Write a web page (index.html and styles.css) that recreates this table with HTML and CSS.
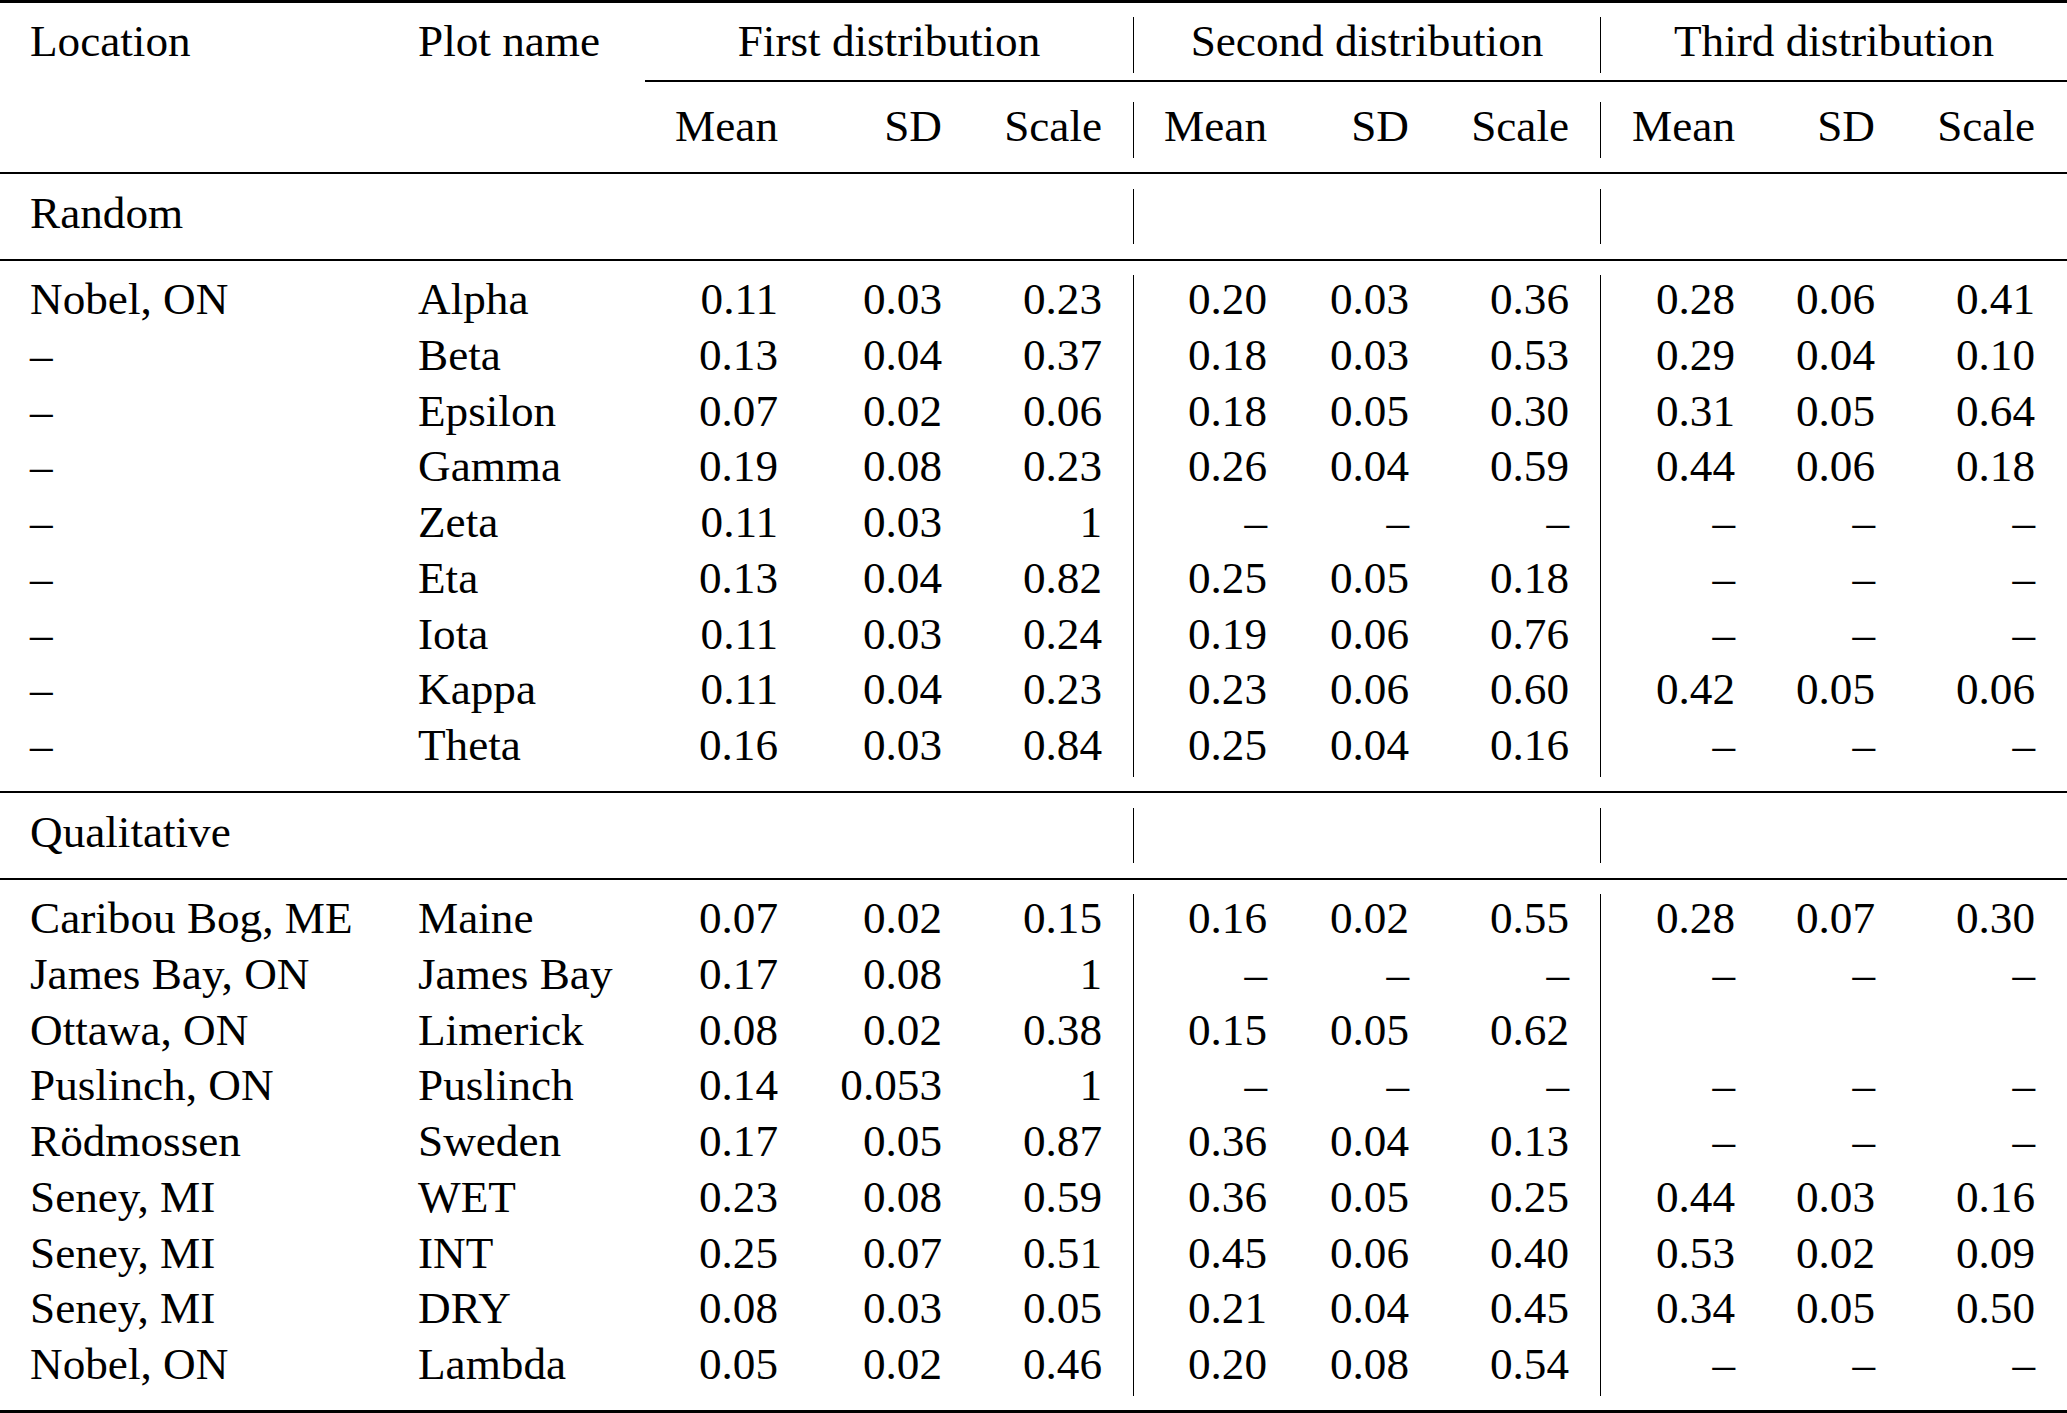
FILE: index.html
```html
<!DOCTYPE html>
<html lang="en">
<head>
<meta charset="utf-8">
<title>Distributions table</title>
<link rel="stylesheet" href="styles.css">
</head>
<body>
<table class="tbl">
  <colgroup>
    <col class="c-loc"><col class="c-plot">
    <col class="c-m1"><col class="c-sd1"><col class="c-sc1">
    <col class="c-m2"><col class="c-sd2"><col class="c-sc2">
    <col class="c-m3"><col class="c-sd3"><col class="c-sc3">
  </colgroup>
  <tbody>
    <tr class="toprule"><td colspan="11" class="ink"></td></tr>
    <tr class="sp-top"><td colspan="11"></td></tr>
    <tr class="r">
      <td class="loc">Location</td><td class="plot">Plot name</td>
      <td colspan="3" class="grp">First distribution</td>
      <td colspan="3" class="grp bar">Second distribution</td>
      <td colspan="3" class="grp bar">Third distribution</td>
    </tr>
    <tr class="sp-cmid-above"><td colspan="11"></td></tr>
    <tr class="cmidrule"><td colspan="2"></td><td colspan="9" class="ink"></td></tr>
    <tr class="sp-cmid-below"><td colspan="11"></td></tr>
    <tr class="r">
      <td class="loc"></td><td class="plot"></td>
      <td class="n">Mean</td><td class="n">SD</td><td class="n sc">Scale</td>
      <td class="n bar">Mean</td><td class="n">SD</td><td class="n sc">Scale</td>
      <td class="n bar">Mean</td><td class="n">SD</td><td class="n sc3">Scale</td>
    </tr>
    <tr class="sp-above"><td colspan="11"></td></tr>
    <tr class="midrule"><td colspan="11" class="ink"></td></tr>
    <tr class="sp-below"><td colspan="11"></td></tr>
    <tr class="r">
      <td colspan="5" class="loc">Random</td>
      <td colspan="3" class="bar"></td>
      <td colspan="3" class="bar"></td>
    </tr>
    <tr class="sp-above"><td colspan="11"></td></tr>
    <tr class="midrule"><td colspan="11" class="ink"></td></tr>
    <tr class="sp-below"><td colspan="11"></td></tr>

    <tr class="r"><td class="loc">Nobel, ON</td><td class="plot">Alpha</td><td class="n">0.11</td><td class="n">0.03</td><td class="n sc">0.23</td><td class="n bar">0.20</td><td class="n">0.03</td><td class="n sc">0.36</td><td class="n bar">0.28</td><td class="n">0.06</td><td class="n sc3">0.41</td></tr>
    <tr class="r"><td class="loc">–</td><td class="plot">Beta</td><td class="n">0.13</td><td class="n">0.04</td><td class="n sc">0.37</td><td class="n bar">0.18</td><td class="n">0.03</td><td class="n sc">0.53</td><td class="n bar">0.29</td><td class="n">0.04</td><td class="n sc3">0.10</td></tr>
    <tr class="r"><td class="loc">–</td><td class="plot">Epsilon</td><td class="n">0.07</td><td class="n">0.02</td><td class="n sc">0.06</td><td class="n bar">0.18</td><td class="n">0.05</td><td class="n sc">0.30</td><td class="n bar">0.31</td><td class="n">0.05</td><td class="n sc3">0.64</td></tr>
    <tr class="r"><td class="loc">–</td><td class="plot">Gamma</td><td class="n">0.19</td><td class="n">0.08</td><td class="n sc">0.23</td><td class="n bar">0.26</td><td class="n">0.04</td><td class="n sc">0.59</td><td class="n bar">0.44</td><td class="n">0.06</td><td class="n sc3">0.18</td></tr>
    <tr class="r"><td class="loc">–</td><td class="plot">Zeta</td><td class="n">0.11</td><td class="n">0.03</td><td class="n sc">1</td><td class="n bar">–</td><td class="n">–</td><td class="n sc">–</td><td class="n bar">–</td><td class="n">–</td><td class="n sc3">–</td></tr>
    <tr class="r"><td class="loc">–</td><td class="plot">Eta</td><td class="n">0.13</td><td class="n">0.04</td><td class="n sc">0.82</td><td class="n bar">0.25</td><td class="n">0.05</td><td class="n sc">0.18</td><td class="n bar">–</td><td class="n">–</td><td class="n sc3">–</td></tr>
    <tr class="r"><td class="loc">–</td><td class="plot">Iota</td><td class="n">0.11</td><td class="n">0.03</td><td class="n sc">0.24</td><td class="n bar">0.19</td><td class="n">0.06</td><td class="n sc">0.76</td><td class="n bar">–</td><td class="n">–</td><td class="n sc3">–</td></tr>
    <tr class="r"><td class="loc">–</td><td class="plot">Kappa</td><td class="n">0.11</td><td class="n">0.04</td><td class="n sc">0.23</td><td class="n bar">0.23</td><td class="n">0.06</td><td class="n sc">0.60</td><td class="n bar">0.42</td><td class="n">0.05</td><td class="n sc3">0.06</td></tr>
    <tr class="r"><td class="loc">–</td><td class="plot">Theta</td><td class="n">0.16</td><td class="n">0.03</td><td class="n sc">0.84</td><td class="n bar">0.25</td><td class="n">0.04</td><td class="n sc">0.16</td><td class="n bar">–</td><td class="n">–</td><td class="n sc3">–</td></tr>

    <tr class="sp-above2"><td colspan="11"></td></tr>
    <tr class="midrule"><td colspan="11" class="ink"></td></tr>
    <tr class="sp-below"><td colspan="11"></td></tr>
    <tr class="r">
      <td colspan="5" class="loc">Qualitative</td>
      <td colspan="3" class="bar"></td>
      <td colspan="3" class="bar"></td>
    </tr>
    <tr class="sp-above"><td colspan="11"></td></tr>
    <tr class="midrule"><td colspan="11" class="ink"></td></tr>
    <tr class="sp-below"><td colspan="11"></td></tr>

    <tr class="r"><td class="loc">Caribou Bog, ME</td><td class="plot">Maine</td><td class="n">0.07</td><td class="n">0.02</td><td class="n sc">0.15</td><td class="n bar">0.16</td><td class="n">0.02</td><td class="n sc">0.55</td><td class="n bar">0.28</td><td class="n">0.07</td><td class="n sc3">0.30</td></tr>
    <tr class="r"><td class="loc">James Bay, ON</td><td class="plot">James Bay</td><td class="n">0.17</td><td class="n">0.08</td><td class="n sc">1</td><td class="n bar">–</td><td class="n">–</td><td class="n sc">–</td><td class="n bar">–</td><td class="n">–</td><td class="n sc3">–</td></tr>
    <tr class="r"><td class="loc">Ottawa, ON</td><td class="plot">Limerick</td><td class="n">0.08</td><td class="n">0.02</td><td class="n sc">0.38</td><td class="n bar">0.15</td><td class="n">0.05</td><td class="n sc">0.62</td><td class="n bar"></td><td class="n"></td><td class="n sc3"></td></tr>
    <tr class="r"><td class="loc">Puslinch, ON</td><td class="plot">Puslinch</td><td class="n">0.14</td><td class="n">0.053</td><td class="n sc">1</td><td class="n bar">–</td><td class="n">–</td><td class="n sc">–</td><td class="n bar">–</td><td class="n">–</td><td class="n sc3">–</td></tr>
    <tr class="r"><td class="loc">Rödmossen</td><td class="plot">Sweden</td><td class="n">0.17</td><td class="n">0.05</td><td class="n sc">0.87</td><td class="n bar">0.36</td><td class="n">0.04</td><td class="n sc">0.13</td><td class="n bar">–</td><td class="n">–</td><td class="n sc3">–</td></tr>
    <tr class="r"><td class="loc">Seney, MI</td><td class="plot">WET</td><td class="n">0.23</td><td class="n">0.08</td><td class="n sc">0.59</td><td class="n bar">0.36</td><td class="n">0.05</td><td class="n sc">0.25</td><td class="n bar">0.44</td><td class="n">0.03</td><td class="n sc3">0.16</td></tr>
    <tr class="r"><td class="loc">Seney, MI</td><td class="plot">INT</td><td class="n">0.25</td><td class="n">0.07</td><td class="n sc">0.51</td><td class="n bar">0.45</td><td class="n">0.06</td><td class="n sc">0.40</td><td class="n bar">0.53</td><td class="n">0.02</td><td class="n sc3">0.09</td></tr>
    <tr class="r"><td class="loc">Seney, MI</td><td class="plot">DRY</td><td class="n">0.08</td><td class="n">0.03</td><td class="n sc">0.05</td><td class="n bar">0.21</td><td class="n">0.04</td><td class="n sc">0.45</td><td class="n bar">0.34</td><td class="n">0.05</td><td class="n sc3">0.50</td></tr>
    <tr class="r"><td class="loc">Nobel, ON</td><td class="plot">Lambda</td><td class="n">0.05</td><td class="n">0.02</td><td class="n sc">0.46</td><td class="n bar">0.20</td><td class="n">0.08</td><td class="n sc">0.54</td><td class="n bar">–</td><td class="n">–</td><td class="n sc3">–</td></tr>

    <tr class="sp-bottom"><td colspan="11"></td></tr>
    <tr class="bottomrule"><td colspan="11" class="ink"></td></tr>
  </tbody>
</table>
</body>
</html>
```
FILE: styles.css
```css
html, body {
  margin: 0;
  padding: 0;
  background: #ffffff;
}

body {
  font-family: "Liberation Serif", "Times New Roman", serif;
  font-size: 45.2px;
  color: #000000;
  overflow: hidden;
}

.tbl {
  width: 2067px;
  table-layout: fixed;
  border-collapse: separate;
  border-spacing: 0;
}

.c-loc { width: 418px; }
.c-plot { width: 227px; }
.c-m1 { width: 133px; }
.c-sd1 { width: 164px; }
.c-sc1 { width: 191px; }
.c-m2 { width: 134px; }
.c-sd2 { width: 142px; }
.c-sc2 { width: 191px; }
.c-m3 { width: 135px; }
.c-sd3 { width: 140px; }
.c-sc3 { width: 192px; }

.tbl td {
  padding: 0;
  vertical-align: top;
  white-space: nowrap;
}

.r { height: 55.75px; }
.r td {
  height: 55.75px;
  line-height: 49.5px;
}

.loc { padding-left: 30px !important; text-align: left; }
.plot { text-align: left; }
.n { text-align: right; }
.sc { padding-right: 31px !important; }
.sc3 { padding-right: 32px !important; }
.grp { text-align: center; }
.bar { border-left: 1px solid #000000; }

.ink { background: #000000; }

.toprule td { height: 2.5px; }
.midrule td { height: 2px; }
.cmidrule td { height: 1.5px; }
.bottomrule td { height: 3.5px; }

.sp-top td { height: 14.5px; }
.sp-cmid-above td { height: 7.25px; }
.sp-cmid-below td { height: 20.5px; }
.sp-above td { height: 14.25px; }
.sp-above2 td { height: 14.25px; }
.sp-below td { height: 14.5px; }
.sp-bottom td { height: 13.75px; }
```
